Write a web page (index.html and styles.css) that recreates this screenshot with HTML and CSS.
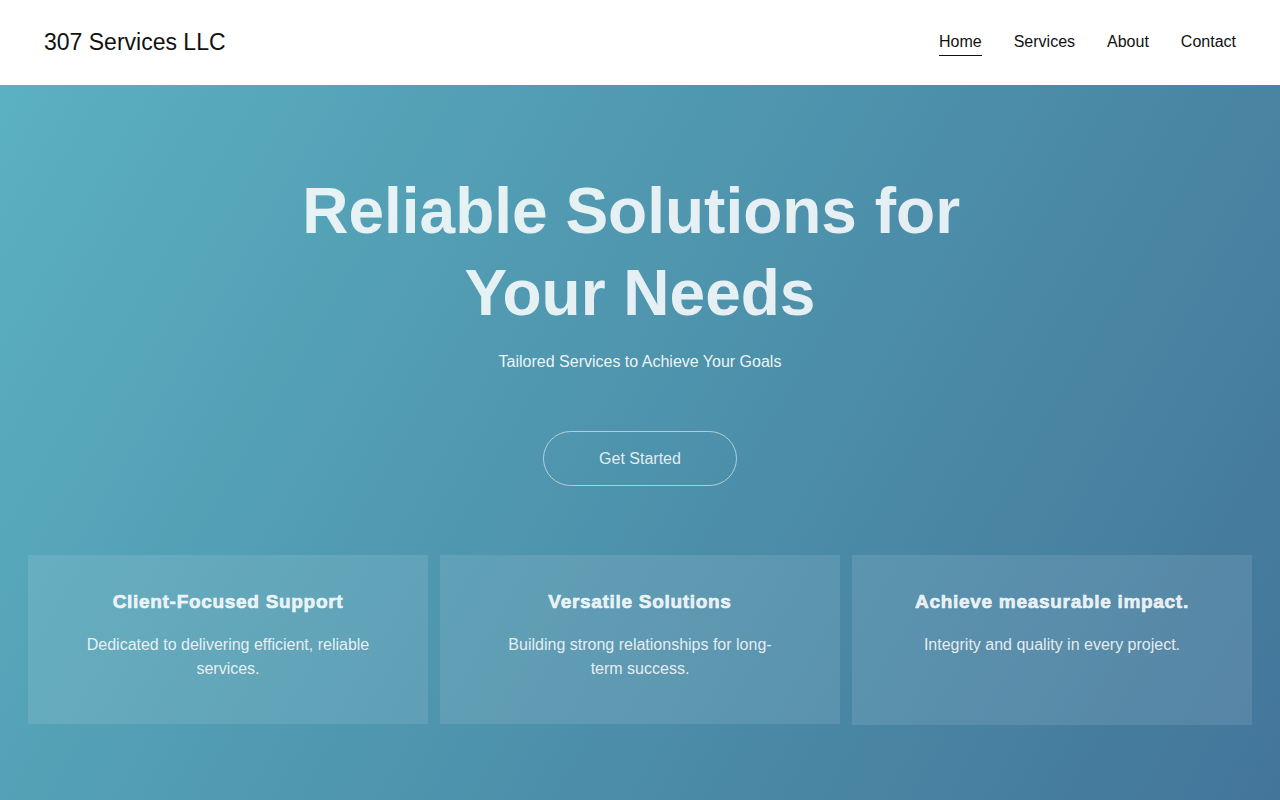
FILE: index.html
```html
<!DOCTYPE html>
<html lang="en">
<head>
<meta charset="utf-8">
<title>307 Services LLC</title>
<link rel="stylesheet" href="styles.css">
</head>
<body>
<header class="site-header">
  <div class="logo">307 Services LLC</div>
  <nav class="nav">
    <a class="nav-link active" href="#">Home</a>
    <a class="nav-link" href="#">Services</a>
    <a class="nav-link" href="#">About</a>
    <a class="nav-link" href="#">Contact</a>
  </nav>
</header>
<main class="hero">
  <h1 class="hero-title">Reliable Solutions for&nbsp;<br>Your Needs</h1>
  <p class="hero-sub">Tailored Services to Achieve Your Goals</p>
  <a class="cta" href="#">Get Started</a>
  <section class="cards">
    <div class="card">
      <h3 class="card-title">Client-Focused Support</h3>
      <p class="card-text">Dedicated to delivering efficient, reliable services.</p>
    </div>
    <div class="card">
      <h3 class="card-title">Versatile Solutions</h3>
      <p class="card-text">Building strong relationships for long-term success.</p>
    </div>
    <div class="card card-tall">
      <h3 class="card-title">Achieve measurable impact.</h3>
      <p class="card-text">Integrity and quality in every project.</p>
    </div>
  </section>
</main>
</body>
</html>
```
FILE: styles.css
```css
* { box-sizing: border-box; }
html, body { margin: 0; padding: 0; }
body {
  font-family: "Liberation Sans", Arial, sans-serif;
  color: #111;
  background: #4a8aa8;
  min-height: 800px;
}
.site-header {
  height: 85px;
  background: #fff;
  display: flex;
  align-items: center;
  justify-content: space-between;
  padding: 0 44px;
}
.logo {
  font-size: 23px;
  color: #111;
}
.nav {
  display: flex;
  gap: 32px;
  margin-top: 3px;
}
.nav-link {
  color: #111;
  text-decoration: none;
  font-size: 16px;
  line-height: 20px;
  padding-bottom: 3px;
  border-bottom: 1.5px solid transparent;
}
.nav-link.active { border-bottom-color: #111; }

.hero {
  min-height: 715px;
  background: linear-gradient(120deg, #5bb0c1 0%, #4f96ae 45%, #43759a 100%);
  padding: 85px 28px 60px;
  display: flex;
  flex-direction: column;
  align-items: center;
  text-align: center;
}
.hero-title {
  margin: 0;
  font-size: 64px;
  line-height: 82px;
  font-weight: 700;
  color: rgba(255, 255, 255, 0.86);
}
.hero-sub {
  margin: 16px 0 0;
  font-size: 16px;
  line-height: 24px;
  color: rgba(255, 255, 255, 0.92);
}
.cta {
  margin-top: 57px;
  width: 194px;
  height: 55px;
  border: 1px solid rgba(255, 255, 255, 0.55);
  border-radius: 28px;
  display: flex;
  align-items: center;
  justify-content: center;
  color: rgba(255, 255, 255, 0.85);
  text-decoration: none;
  font-size: 16px;
}
.cards {
  margin-top: 69px;
  width: 100%;
  display: grid;
  grid-template-columns: repeat(3, 1fr);
  align-items: start;
  gap: 12px;
}
.card {
  background: rgba(255, 255, 255, 0.1);
  padding: 35px 56px 43px;
  min-height: 169px;
  color: rgba(255, 255, 255, 0.85);
}
.card-tall { min-height: 170px; }
.card-title {
  margin: 0 0 19px;
  font-size: 19px;
  line-height: 24px;
  font-weight: 700;
  letter-spacing: 0.7px;
  -webkit-text-stroke: 0.7px rgba(255, 255, 255, 0.85);
  color: rgba(255, 255, 255, 0.85);
}
.card-text {
  margin: 0;
  font-size: 16px;
  line-height: 24px;
}
```
